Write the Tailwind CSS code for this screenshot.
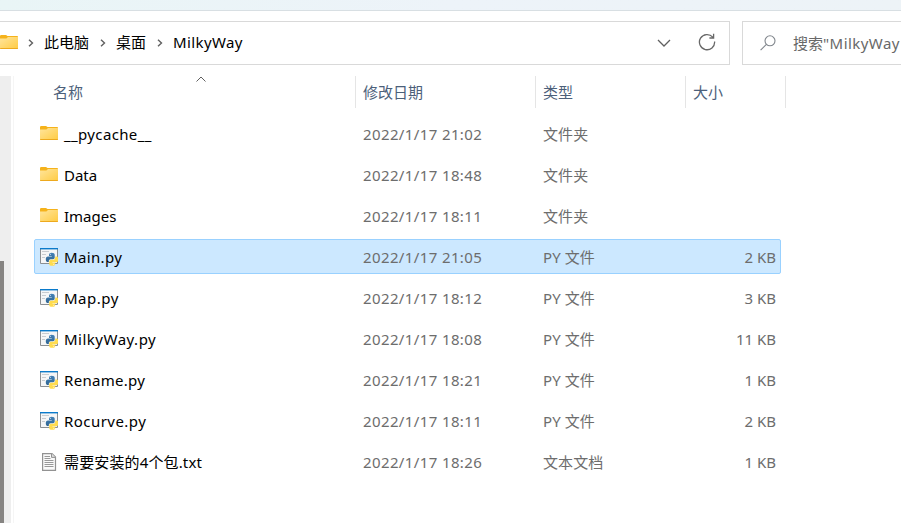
<!DOCTYPE html>
<html lang="zh-CN">
<head>
<meta charset="utf-8">
<title>MilkyWay</title>
<script src="https://cdn.jsdelivr.net/npm/@tailwindcss/browser@4"></script>
</head>
<body class="w-[901px] h-[523px] overflow-hidden bg-white font-['Noto_Sans','Noto_Sans_CJK_SC',sans-serif] text-[15px] leading-[20px] text-black">
<svg width="0" height="0" class="absolute">
  <defs>
    <linearGradient id="fold" x1="0" y1="0" x2="1" y2="1"><stop offset="0" stop-color="#ffe59c"/><stop offset="1" stop-color="#ffcb42"/></linearGradient>
    <linearGradient id="pyb" x1="0" y1="0" x2="0" y2="1"><stop offset="0" stop-color="#4482b6"/><stop offset="1" stop-color="#2f6593"/></linearGradient>
  </defs>
  <symbol id="folder" viewBox="0 0 18 15">
    <path d="M0 1.2Q0 0 1.2 0H6L7.5 1H17.2Q18 1 18 2V6H0Z" fill="#f5b21b"/>
    <path d="M0 3.6H6.4L8 2H18V13.2Q18 14 17.2 14H.8Q0 14 0 13.2Z" fill="url(#fold)"/>
    <path d="M0 13H18Q18 14 17.2 14H.8Q0 14 0 13Z" fill="#eda91e"/>
  </symbol>
  <symbol id="python" viewBox="0 0 18 18">
    <path d="M.5 .5H17.5V15.5H.5Z" fill="#f5f6f7" stroke="#8b8f93"/>
    <path d="M0 0H18V1.4H0Z" fill="#0a7acb"/>
    <path d="M2 3.5H9M2 6.5H6M2 9.5H5" stroke="#c8ccd0"/>
    <path d="M9 6.6Q9 4.7 11.6 4.7Q14.7 4.7 14.7 6.8V9.6Q14.7 11.2 13 11.2H10.6Q8.8 11.2 8.8 12.8V14H7.8Q5.8 14 5.8 11.2Q5.8 8.4 8 8.4H11.8V7.9H9Z" fill="url(#pyb)"/>
    <path d="M15.2 8.4H16.2Q18.4 8.4 18.4 11.2Q18.4 14.2 16.2 14.2H12.4V14.7H15.2V15.9Q15.2 17.8 12.2 17.8Q9.2 17.8 9.2 15.9V13.2Q9.2 11.7 10.8 11.7H13.5Q15.2 11.7 15.2 10Z" fill="#ffdc4f"/>
    <circle cx="10.4" cy="6.3" r=".5" fill="#fff"/><circle cx="13.8" cy="16.2" r=".5" fill="#fff"/>
  </symbol>
  <symbol id="text" viewBox="0 0 18 18">
    <path d="M2.6 .6H12L15.5 4V17.4H2.6Z" fill="#fafafa" stroke="#929292" stroke-width="1.2"/>
    <path d="M11.5 .6V4.4H15.5" fill="#ddd" stroke="#929292"/>
    <path d="M4.5 3.5H10M4.5 5.5H10.5M4.5 7.5H13.5M4.5 9.5H13.5M4.5 11.5H13.5M4.5 13.5H13.5" stroke="#999"/>
  </symbol>
</svg>
<div class="flex h-full flex-col">
  <div class="h-[11px] shrink-0 border-b border-[#d8dfe3] bg-linear-to-r from-[#e9f5f6] via-[#edf3f9] to-[#edf3f7]"></div>

  <header class="mt-[10px] flex h-[44px] shrink-0 gap-3">
    <nav class="flex w-[730px] shrink-0 items-center border border-l-0 border-[#d9d9d9] pb-px">
      <svg class="h-[15px] w-[18px] shrink-0" ><use href="#folder"/></svg>
      <svg class="ml-[10px] h-2 w-[6px]" viewBox="0 0 6 8" fill="none" stroke="#606060" stroke-width="1.4"><path d="M1 .7L4.5 4L1 7.3"/></svg>
      <span class="mb-[2px] ml-[10px] w-[45px] whitespace-nowrap">此电脑</span>
      <svg class="ml-[11px] h-2 w-[6px]" viewBox="0 0 6 8" fill="none" stroke="#606060" stroke-width="1.4"><path d="M1 .7L4.5 4L1 7.3"/></svg>
      <span class="mb-[2px] ml-[10px] w-[30px] whitespace-nowrap">桌面</span>
      <svg class="ml-[11px] h-2 w-[6px]" viewBox="0 0 6 8" fill="none" stroke="#606060" stroke-width="1.4"><path d="M1 .7L4.5 4L1 7.3"/></svg>
      <span class="mb-[2px] ml-[10px] tracking-[0.4px]">MilkyWay</span>
      <svg class="ml-auto h-2 w-[14px]" viewBox="0 0 14 8" fill="none" stroke="#606060" stroke-width="1.3"><path d="M1 1L7 7L13 1"/></svg>
      <svg class="-mt-px ml-[27px] mr-[13px] h-[18px] w-[18px]" viewBox="0 0 18 18" fill="none" stroke="#686868" stroke-width="1.3"><path d="M16.6 8.5A7.6 7.6 0 1 1 14.8 4.2M15.6 .8V5H11.4"/></svg>
    </nav>
    <div class="flex flex-1 items-center overflow-hidden whitespace-nowrap border border-r-0 border-[#d9d9d9] text-[#686868]">
      <svg class="ml-[17px] h-4 w-4 shrink-0 -mt-px" viewBox="0 0 16 16" fill="none" stroke="#80868c" stroke-width="1.1"><circle cx="10" cy="5.8" r="5"/><path d="M6.4 9.4L.6 15.2"/></svg>
      <span class="ml-[17px]">搜索<span class="tracking-[0.45px]">"MilkyWay</span></span>
    </div>
  </header>

  <div class="mt-[11px] flex flex-1">
    <aside class="flex w-[11px] shrink-0 items-end bg-[#eee]"><div class="h-[262px] w-1 bg-[#868482]"></div></aside>
    <main class="ml-[2px] flex-1 border-l border-[#f5f5f5]">
      <div class="ml-[20px] flex h-8 text-[#4c607a]">
        <div class="relative flex w-[322px] items-center border-r border-[#e5e5e5] pl-[19px]">名称
          <svg class="absolute left-[162px] top-0 h-[6px] w-[10px]" viewBox="0 0 10 6" fill="none" stroke="#606060"><path d="M.5 5.5L5 1L9.5 5.5"/></svg>
        </div>
        <div class="flex w-[180px] items-center border-r border-[#e5e5e5] pl-[7px]">修改日期</div>
        <div class="flex w-[150px] items-center border-r border-[#e5e5e5] pl-[7px]">类型</div>
        <div class="flex w-[100px] items-center border-r border-[#e5e5e5] pl-[7px]">大小</div>
      </div>
      <div id="files" class="ml-[20px] mt-2 flex w-[747px] flex-col gap-[6px]"></div>
    </main>
  </div>
</div>
<script>
const files = [
  ['folder', '__pycache__', '2022/1/17 21:02', '文件夹', '', 'tracking-[0.36px]'],
  ['folder', 'Data', '2022/1/17 18:48', '文件夹', '', 'tracking-normal'],
  ['folder', 'Images', '2022/1/17 18:11', '文件夹', '', 'tracking-normal'],
  ['python', 'Main.py', '2022/1/17 21:05', 'PY 文件', '2 KB', 'tracking-[0.36px]'],
  ['python', 'Map.py', '2022/1/17 18:12', 'PY 文件', '3 KB', 'tracking-[0.5px]'],
  ['python', 'MilkyWay.py', '2022/1/17 18:08', 'PY 文件', '11 KB', 'tracking-[0.5px]'],
  ['python', 'Rename.py', '2022/1/17 18:21', 'PY 文件', '1 KB', 'tracking-[0.3px]'],
  ['python', 'Rocurve.py', '2022/1/17 18:11', 'PY 文件', '2 KB', 'tracking-[0.45px]'],
  ['text', '需要安装的4个包.txt', '2022/1/17 18:26', '文本文档', '1 KB', 'tracking-[0.14px]'],
];
document.getElementById('files').innerHTML = files.map(([icon, name, date, type, size, track]) => `
  <div class="flex h-[35px] items-center rounded-[2px] border pl-[5px] pr-[4px] whitespace-nowrap text-[#6d6d6d] ${name === 'Main.py' ? 'border-[#99d1ff] bg-[#cce8ff]' : 'border-transparent'}">
    <svg class="${icon === 'folder' ? 'h-[15px] -mt-px' : 'h-[18px] mt-px'} w-[18px] shrink-0 overflow-visible"><use href="#${icon}"/></svg>
    <span class="ml-[6px] w-[299px] text-black ${track}">${name}</span>
    <span class="w-[180px] tracking-[0.38px]">${date}</span>
    <span class="w-[130px] tracking-[0.1px]">${type}</span>
    <span class="ml-auto">${size}</span>
  </div>`).join('');
</script>
</body>
</html>
